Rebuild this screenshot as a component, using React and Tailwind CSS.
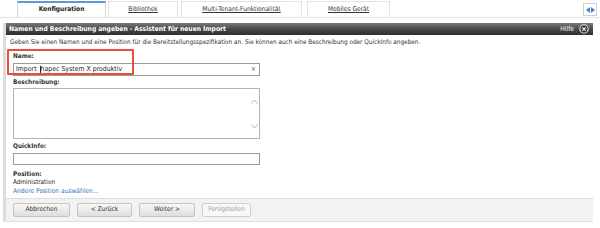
import React from "react";

const font = { fontFamily: '"DejaVu Sans Condensed", "DejaVu Sans", Tahoma, sans-serif' };

function Tab({ label, active, w, ml }) {
  return (
    <div
      className={`h-[16px] flex items-center justify-center bg-white ${
        active
          ? "border-t-2 border-t-[#5b9bd5] border-x border-x-[#d6d6d6] font-bold text-[#222]"
          : "border border-[#e2e2e2] border-b-0 text-[#333] underline"
      } ${w} ${ml} text-[6.6px]`}
    >
      {label}
    </div>
  );
}

function Btn({ label, w, disabled }) {
  return (
    <div
      className={`h-[14px] ${w} flex items-center justify-center rounded-[2px] border text-[6.6px] ${
        disabled
          ? "border-[#d0d0d0] bg-[#f8f8f8] text-[#9a9a9a]"
          : "border-[#c4c4c4] bg-gradient-to-b from-[#f7f7f7] to-[#dedede] text-[#333]"
      }`}
    >
      {label}
    </div>
  );
}

export default function App() {
  return (
    <div className="w-[600px] h-[228px] bg-white relative overflow-hidden" style={font}>
      {/* Tabs */}
      <div className="h-[18px] flex items-end pt-[2px] border-b border-[#e4e4e4] relative">
        <Tab label="Konfiguration" active w="w-[89px]" ml="ml-[17px]" />
        <Tab label="Bibliothek" w="w-[70px]" ml="ml-[2px]" />
        <Tab label="Multi-Tenant-Funktionalität" w="w-[121px]" ml="ml-[3px]" />
        <Tab label="Mobiles Gerät" w="w-[83px]" ml="ml-[5px]" />
        <div className="ml-auto mr-[3px] mb-[1px] w-[14px] h-[13px] border border-[#cfcfcf] bg-white flex items-center justify-center gap-[1px]">
          <svg width="4" height="6" viewBox="0 0 4 6"><path d="M4 0 L0 3 L4 6 Z" fill="#3d7fd0" /></svg>
          <svg width="4" height="6" viewBox="0 0 4 6"><path d="M0 0 L4 3 L0 6 Z" fill="#3d7fd0" /></svg>
        </div>
      </div>

      {/* Panel */}
      <div className="ml-[3px] w-[590px] border-l-[3px] border-[#dcdcdc] mt-[5px] h-[199px] flex flex-col">
        {/* Title bar */}
        <div className="h-[12px] bg-gradient-to-b from-[#7a7a7a] via-[#4a4a4a] to-[#2e2e2e] flex items-center px-[3px] text-white text-[6.7px] font-bold">
          <span>Namen und Beschreibung angeben - Assistent für neuen Import</span>
          <span className="ml-auto font-normal mr-[5px]">Hilfe</span>
          <svg width="10" height="10" viewBox="0 0 10 10" className="mr-[1px]">
            <circle cx="5" cy="5" r="4.2" fill="#3a3a3a" stroke="#e8e8e8" strokeWidth="1.1" />
            <path d="M3.3 3.3 L6.7 6.7 M6.7 3.3 L3.3 6.7" stroke="#f0f0f0" strokeWidth="1.2" />
          </svg>
        </div>

        {/* Description */}
        <div className="h-[10px] mt-[3px] pl-[4px] flex items-center text-[6.4px] text-[#333]">
          Geben Sie einen Namen und eine Position für die Bereitstellungsspezifikation an. Sie können auch eine Beschreibung oder QuickInfo angeben.
        </div>

        {/* Form */}
        <div className="pl-[7px] flex flex-col relative">
          <div className="h-[8px] mt-[5px] flex items-center text-[6.4px] font-bold text-[#333]">Name:</div>
          <div className="mt-[2px] w-[247px] h-[13px] border border-[#9a9a9a] flex items-center pl-[2px] pr-[3px] text-[6.9px] text-[#222]">
            <span>Import</span>
            <span className="inline-block w-[1px] h-[8px] bg-[#222] ml-[3px]" />
            <span>hapec System X produktiv</span>
            <span className="ml-auto text-[7px] text-[#555] leading-none">×</span>
          </div>
          <div className="h-[8px] mt-[3px] flex items-center text-[6.4px] font-bold text-[#333]">Beschreibung:</div>
          <div className="mt-[1px] w-[247px] h-[51px] border border-[#b4b4b4] flex justify-end">
            <div className="w-[9px] flex flex-col items-center justify-between py-[10px] pb-[9px]">
              <svg width="7" height="5" viewBox="0 0 7 5"><path d="M0.5 4.5 L3.5 1 L6.5 4.5" fill="none" stroke="#b0b0b0" strokeWidth="1" /></svg>
              <svg width="7" height="5" viewBox="0 0 7 5"><path d="M0.5 0.5 L3.5 4 L6.5 0.5" fill="none" stroke="#b0b0b0" strokeWidth="1" /></svg>
            </div>
          </div>
          <div className="h-[8px] mt-[4px] flex items-center text-[6.4px] font-bold text-[#333]">QuickInfo:</div>
          <div className="mt-[2px] w-[247px] h-[12px] border border-[#9a9a9a]" />
          <div className="h-[8px] mt-[6px] flex items-center text-[6.4px] font-bold text-[#333]">Position:</div>
          <div className="h-[8px] flex items-center text-[6.4px] text-[#222]">Administration</div>
          <div className="h-[9px] flex items-center text-[6.6px] text-[#2f74c0]">Andere Position auswählen...</div>

          {/* Red highlight annotation */}
          <div className="absolute left-[1px] top-[1px] w-[127px] h-[26px] border-2 border-[#e4503c] rounded-[1px]" />
        </div>

        {/* Footer */}
        <div className="mt-[2px] h-[24px] bg-[#f2f2f2] border-y border-[#dedede] flex items-center pl-[7px] gap-[7px]">
          <Btn label="Abbrechen" w="w-[57px]" />
          <Btn label="< Zurück" w="w-[55px]" />
          <Btn label="Weiter >" w="w-[56px]" />
          <Btn label="Fertigstellen" w="w-[49px]" disabled />
        </div>
      </div>
    </div>
  );
}
